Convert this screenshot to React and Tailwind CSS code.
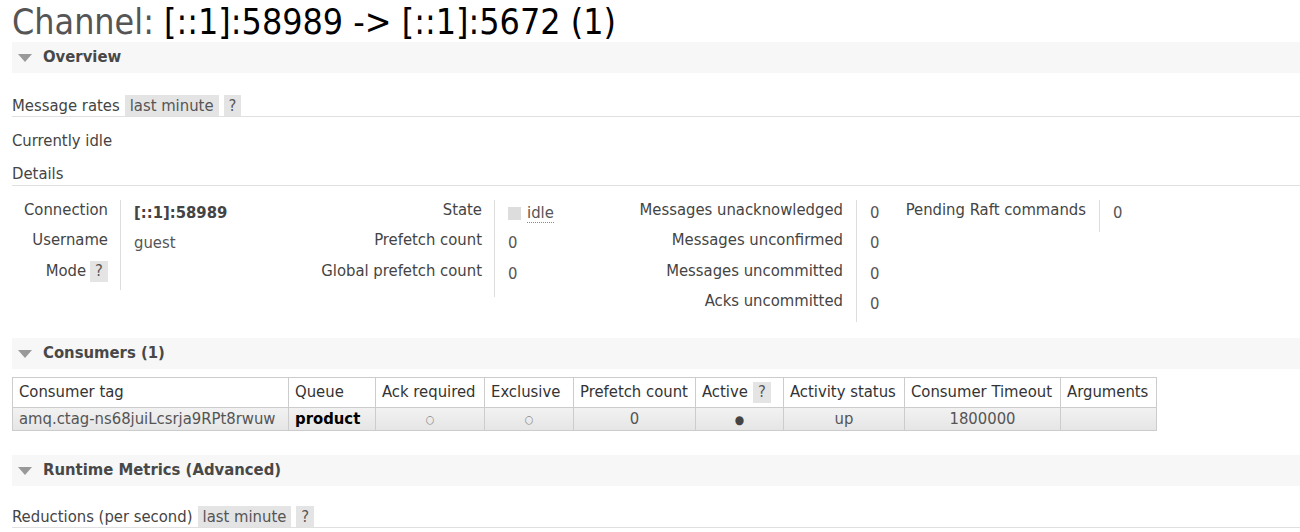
import { Fragment } from 'react';

const font = { fontFamily: '"DejaVu Sans Condensed", "DejaVu Sans", sans-serif' };

function SectionBar({ title }) {
  return (
    <div className="flex h-[31px] items-center bg-[#f7f7f7] pl-[6px]">
      <span className="mr-[11px] inline-block h-0 w-0 border-x-[7px] border-t-[8px] border-x-transparent border-t-[#999]" />
      <span className="text-[16.5px] font-bold text-[#484848]">{title}</span>
    </div>
  );
}

function Help({ className = '' }) {
  return (
    <span className={`inline-flex h-[21px] items-center bg-[#e4e4e4] px-[5px] text-[#555] ${className}`}>?</span>
  );
}

function RateRow({ label }) {
  return (
    <div className="flex h-[22px] items-end gap-[5px] border-b border-[#e0e0e0] text-[16.5px] leading-[21px] text-[#444]">
      <span className="self-center">{label}</span>
      <span className="inline-flex h-[21px] items-center bg-[#e4e4e4] px-[5px] text-[#555]">last minute</span>
      <Help />
    </div>
  );
}

function DetailColumn({ labelWidth, valueWidth, gap = 12, lineHeight, rows }) {
  return (
    <div className="flex">
      <div className="flex flex-col gap-[10px] text-right" style={{ width: labelWidth }}>
        {rows.map((r) => (
          <div key={r.label} className="flex h-[20.5px] items-center justify-end text-[16.5px] text-[#444]">
            {r.label}
            {r.help && <Help className="ml-[4px]" />}
          </div>
        ))}
      </div>
      <div
        className="flex flex-col gap-[10px] border-l border-[#ddd] pl-[13px] pt-[3px]"
        style={{ height: lineHeight, width: valueWidth, marginLeft: gap }}
      >
        {rows.map((r) => (
          <div key={r.label} className="flex h-[20.5px] items-center text-[16.5px] text-[#555]">
            {r.value}
          </div>
        ))}
      </div>
    </div>
  );
}

const columns = [
  { title: 'Consumer tag', w: 276, align: 'left' },
  { title: 'Queue', w: 87, align: 'left' },
  { title: 'Ack required', w: 109 },
  { title: 'Exclusive', w: 89 },
  { title: 'Prefetch count', w: 122 },
  { title: 'Active', w: 88, help: true },
  { title: 'Activity status', w: 121 },
  { title: 'Consumer Timeout', w: 156 },
  { title: 'Arguments', w: 96 },
];

const consumer = [
  <span className="text-[#555]">amq.ctag-ns68juiLcsrja9RPt8rwuw</span>,
  <b className="text-black">product</b>,
  <span className="text-[11px] text-[#888]">○</span>,
  <span className="text-[11px] text-[#888]">○</span>,
  '0',
  <span className="text-[12px] text-[#444]">●</span>,
  'up',
  '1800000',
  '',
];

export default function App() {
  return (
    <div className="h-[532px] overflow-hidden bg-white pl-[12px]" style={font}>
      <h1 className="h-[42px] pt-[2px] text-[35.5px] leading-[40px] text-black">
        <span className="text-[#555]">Channel:</span> [::1]:58989 -&gt; [::1]:5672 (1)
      </h1>

      <SectionBar title="Overview" />

      <div className="mt-[22px]">
        <RateRow label="Message rates" />
      </div>
      <p className="mt-[14px] h-[20px] text-[16.5px] leading-[20px] text-[#444]">Currently idle</p>
      <p className="mt-[13px] h-[22px] border-b border-[#e0e0e0] text-[16.5px] leading-[20px] text-[#444]">
        Details
      </p>

      <div className="mt-[14px] flex items-start">
        <DetailColumn
          labelWidth={96}
          valueWidth={140}
          lineHeight={90}
          rows={[
            { label: 'Connection', value: <b className="text-[#444]">[::1]:58989</b> },
            { label: 'Username', value: 'guest' },
            { label: 'Mode', help: true, value: '' },
          ]}
        />
        <DetailColumn
          labelWidth={222}
          valueWidth={66}
          lineHeight={97}
          rows={[
            {
              label: 'State',
              value: (
                <span className="flex items-center">
                  <span className="mr-[6px] inline-block h-[13px] w-[13px] bg-[#ddd]" />
                  <span className="border-b border-dotted border-[#888] leading-[18px]">idle</span>
                </span>
              ),
            },
            { label: 'Prefetch count', value: '0' },
            { label: 'Global prefetch count', value: '0' },
          ]}
        />
        <DetailColumn
          labelWidth={283}
          valueWidth={48}
          gap={13}
          lineHeight={122}
          rows={[
            { label: 'Messages unacknowledged', value: '0' },
            { label: 'Messages unconfirmed', value: '0' },
            { label: 'Messages uncommitted', value: '0' },
            { label: 'Acks uncommitted', value: '0' },
          ]}
        />
        <DetailColumn
          labelWidth={182}
          valueWidth={60}
          gap={13}
          lineHeight={32}
          rows={[{ label: 'Pending Raft commands', value: '0' }]}
        />
      </div>

      <div className="mt-[16px]">
        <SectionBar title="Consumers (1)" />
      </div>

      <table className="mt-[8px] border-collapse text-[16.5px]">
        <thead>
          <tr>
            {columns.map((c) => (
              <th
                key={c.title}
                className="h-[30px] whitespace-nowrap border border-[#ccc] px-[6px] text-left font-normal text-[#333]"
                style={{ width: c.w }}
              >
                {c.title}
                {c.help && <Help className="ml-[5px]" />}
              </th>
            ))}
          </tr>
        </thead>
        <tbody>
          <tr className="bg-gradient-to-b from-[#f2f2f2] to-[#e5e5e5]">
            {consumer.map((v, i) => (
              <td
                key={i}
                className={`h-[23px] whitespace-nowrap border border-[#ccc] px-[6px] py-0 leading-[20px] text-[#555] ${
                  columns[i].align === 'left' ? 'text-left' : 'text-center'
                }`}
              >
                <Fragment>{v}</Fragment>
              </td>
            ))}
          </tr>
        </tbody>
      </table>

      <div className="mt-[24px]">
        <SectionBar title="Runtime Metrics (Advanced)" />
      </div>
      <div className="mt-[20px]">
        <RateRow label="Reductions (per second)" />
      </div>
    </div>
  );
}
